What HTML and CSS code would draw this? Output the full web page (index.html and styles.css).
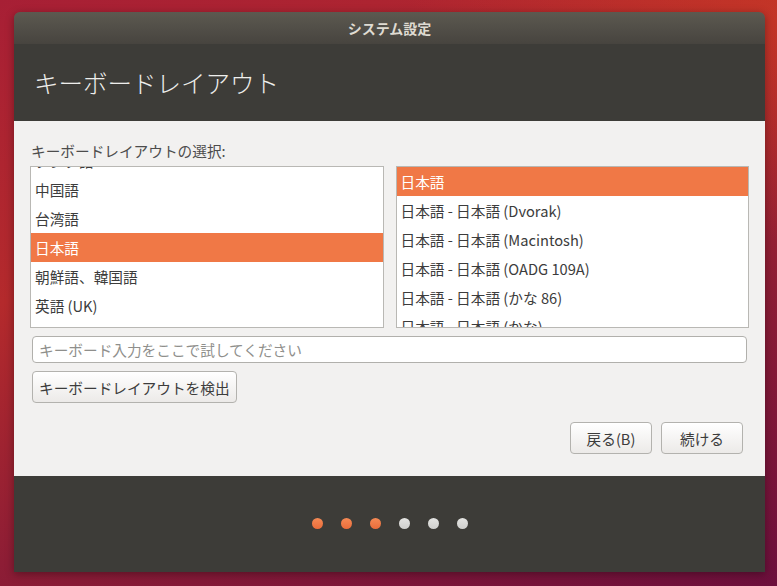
FILE: index.html
```html
<!DOCTYPE html>
<html lang="ja">
<head>
<meta charset="utf-8">
<title>キーボードレイアウト</title>
<link rel="stylesheet" href="styles.css">
</head>
<body>
<div class="desktop">
  <div class="window">
    <div class="titlebar">システム設定</div>
    <div class="header">キーボードレイアウト</div>
    <div class="content">
      <div class="label">キーボードレイアウトの選択:</div>
      <div class="lists">
        <div class="listbox">
          <ul class="rows rows-scrolled">
            <li>タジク語</li>
            <li>中国語</li>
            <li>台湾語</li>
            <li class="selected">日本語</li>
            <li>朝鮮語、韓国語</li>
            <li>英語 (UK)</li>
            <li>英語 (US)</li>
          </ul>
        </div>
        <div class="listbox">
          <ul class="rows">
            <li class="selected">日本語</li>
            <li>日本語 - 日本語 (Dvorak)</li>
            <li>日本語 - 日本語 (Macintosh)</li>
            <li>日本語 - 日本語 (OADG 109A)</li>
            <li>日本語 - 日本語 (かな 86)</li>
            <li>日本語 - 日本語 (かな)</li>
          </ul>
        </div>
      </div>
      <input class="test-input" type="text" placeholder="キーボード入力をここで試してください">
      <div class="detect-row"><button class="btn">キーボードレイアウトを検出</button></div>
      <div class="nav-row">
        <button class="btn btn-nav">戻る(B)</button>
        <button class="btn btn-nav">続ける</button>
      </div>
    </div>
    <div class="footer">
      <span class="dot on"></span>
      <span class="dot on"></span>
      <span class="dot on"></span>
      <span class="dot"></span>
      <span class="dot"></span>
      <span class="dot"></span>
    </div>
  </div>
</div>
</body>
</html>
```

FILE: styles.css
```css
html, body {
  margin: 0;
  padding: 0;
  height: 100%;
}
body {
  font-family: "Noto Sans CJK JP", "Noto Sans", sans-serif;
  font-size: 14.67px;
  color: #3c3c3c;
  background:
    radial-gradient(ellipse 500px 300px at 900px -50px, rgba(220,70,30,0.55), rgba(220,70,30,0) 100%),
    linear-gradient(160deg, #a71f35 0%, #b42a2c 35%, #8d1d35 65%, #6c0f3c 100%);
  overflow: hidden;
}
.desktop {
  padding: 12px 12px 0 14px;
}
.window {
  width: 751px;
  height: 560px;
  display: flex;
  flex-direction: column;
  border-radius: 6px 6px 0 0;
  overflow: hidden;
  box-shadow: 0 2px 8px rgba(0,0,0,0.35);
}
.titlebar {
  height: 32px;
  line-height: 32px;
  text-align: center;
  font-weight: bold;
  font-size: 14px;
  color: #dfdbd2;
  background: linear-gradient(#5c5950, #47443f);
}
.header {
  height: 77px;
  background: #3d3c38;
  color: #eeeeec;
  font-size: 24.5px;
  line-height: 77px;
  padding-left: 20px;
  font-weight: 300;
  box-sizing: border-box;
}
.content {
  flex: 0 0 355px;
  background: #f2f1f0;
  padding: 20px 16px 0 16px;
  box-sizing: border-box;
  display: flex;
  flex-direction: column;
}
.label {
  height: 20px;
  line-height: 20px;
  padding-left: 1px;
  color: #4c4c4c;
  margin-bottom: 5px;
}
.lists {
  display: flex;
  gap: 12px;
}
.listbox {
  height: 162px;
  flex: 1 1 0;
  border: 1px solid #b9b8b4;
  background: #ffffff;
  box-sizing: border-box;
  overflow: hidden;
}
.rows {
  list-style: none;
  margin: 0;
  padding: 0;
}
.rows-scrolled {
  margin-top: -21px;
}
.rows li {
  height: 29px;
  line-height: 29px;
  padding-left: 4px;
  white-space: nowrap;
  color: #3c3c3c;
}
.rows li.selected {
  background: #f07846;
  color: #ffffff;
}
.test-input {
  margin: 8px 2px 0 2px;
  height: 27px;
  box-sizing: border-box;
  border: 1px solid #b1b0ac;
  border-radius: 4px;
  background: #ffffff;
  font-family: inherit;
  font-size: 14.67px;
  padding: 0 6px;
  color: #3c3c3c;
  outline: none;
}
.test-input::placeholder {
  color: #8f8f8c;
}
.detect-row {
  display: flex;
  margin-top: 8px;
  padding-left: 2px;
}
.btn {
  font-family: inherit;
  font-size: 14.67px;
  color: #3c3c3c;
  height: 32px;
  padding: 0 6px;
  border: 1px solid #b3b2ae;
  border-radius: 4px;
  background: linear-gradient(#ffffff, #eceae8);
  box-shadow: 0 1px 0 rgba(255,255,255,0.8) inset;
  white-space: nowrap;
}
.nav-row {
  display: flex;
  justify-content: flex-end;
  gap: 9px;
  margin-top: 19px;
  padding-right: 6px;
}
.btn-nav {
  width: 82px;
}
.footer {
  flex: 1 1 auto;
  background: #3d3c38;
  display: flex;
  justify-content: center;
  align-items: center;
  gap: 18px;
  padding-bottom: 1px;
}
.dot {
  width: 11px;
  height: 11px;
  border-radius: 50%;
  background: linear-gradient(#e4e4e2, #cfcfcd);
}
.dot.on {
  background: linear-gradient(#f58a55, #ea6c3a);
}
```
